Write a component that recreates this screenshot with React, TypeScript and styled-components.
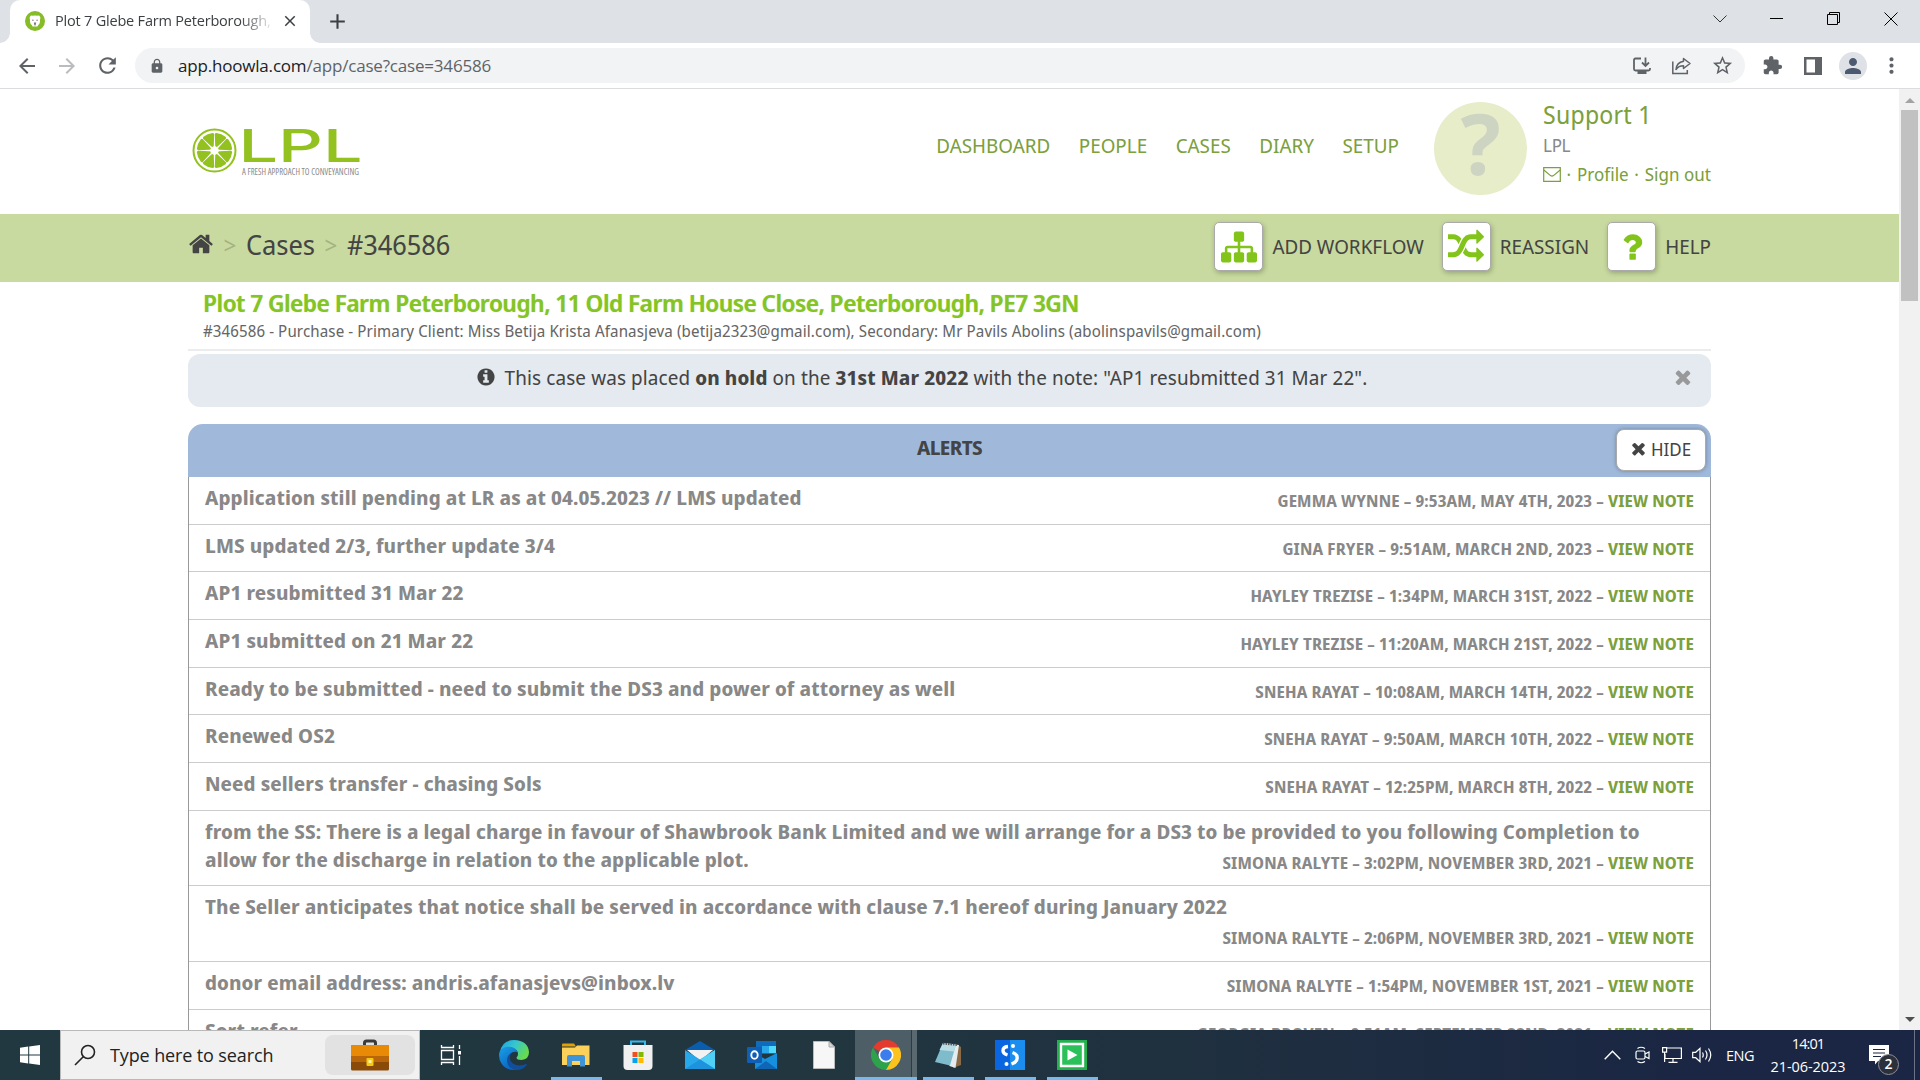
import React from "react";
import styled, { createGlobalStyle } from "styled-components";
import {
  MdAdd,
  MdArrowBack,
  MdArrowForward,
  MdClose,
  MdExtension,
  MdLock,
  MdMoreVert,
  MdPerson,
  MdRefresh,
  MdStarBorder,
} from "react-icons/md";

const Global = createGlobalStyle`
  *, *::before, *::after { box-sizing: border-box; }
  html, body { margin: 0; padding: 0; background: #fff; overflow: hidden; }
  svg { display: block; flex: none; }
`;

const UI = `"Open Sans", "Noto Sans", sans-serif`;
const PAGE = `"Noto Sans Display", "Noto Sans", "Open Sans", sans-serif`;

/* ---------- browser frame ---------- */

const Screen = styled.div`
  width: 1920px;
  height: 1080px;
  display: flex;
  flex-direction: column;
  overflow: hidden;
  font-family: ${PAGE};
  white-space: nowrap;
`;

const TabStrip = styled.div`
  height: 43px;
  flex: none;
  background: #dee1e6;
  display: flex;
  padding-left: 10px;
`;

const Tab = styled.div`
  position: relative;
  width: 300px;
  height: 43px;
  padding: 0 11px 2px 15px;
  background: #fff;
  border-radius: 10px 10px 0 0;
  display: flex;
  align-items: center;
  color: #3c4043;
  &::before,
  &::after {
    content: "";
    position: absolute;
    bottom: 0;
    width: 10px;
    height: 10px;
  }
  &::before {
    left: -10px;
    background: radial-gradient(circle at 0 0, transparent 9.5px, #fff 10px);
  }
  &::after {
    right: -10px;
    background: radial-gradient(circle at 100% 0, transparent 9.5px, #fff 10px);
  }
`;

const TabTitle = styled.div`
  width: 217px;
  margin: 0 11px 0 10px;
  overflow: hidden;
  font: 400 14.5px/24px ${UI};
  letter-spacing: -0.2px;
  mask-image: linear-gradient(90deg, #000 185px, transparent 220px);
`;

const NewTab = styled.div`
  display: flex;
  align-items: center;
  padding: 0 0 1px 15px;
  color: #3c4043;
`;

const WindowControls = styled.div`
  margin-left: auto;
  display: flex;
`;

const WindowButton = styled.div<{ $w: number }>`
  width: ${(p) => p.$w}px;
  height: 37px;
  display: flex;
  align-items: center;
  justify-content: center;
`;

const Toolbar = styled.div`
  height: 46px;
  flex: none;
  background: #fff;
  border-bottom: 1px solid #dadce0;
  display: flex;
  align-items: center;
  padding-left: 15px;
  color: #5f6368;
`;

const NavIcon = styled.div<{ $gap: number; $faded?: boolean }>`
  margin-right: ${(p) => p.$gap}px;
  color: ${(p) => (p.$faded ? "#babcbe" : "#5f6368")};
`;

const Omnibox = styled.div`
  width: 1610px;
  height: 35px;
  border-radius: 18px;
  background: #f1f3f4;
  display: flex;
  align-items: center;
  padding: 0 11px 0 14px;
`;

const Url = styled.div`
  margin-left: 13px;
  font: 400 17px/24px ${UI};
  letter-spacing: -0.19px;
  color: #5f6368;
  b {
    font-weight: 400;
    color: #202124;
  }
`;

const OmniActions = styled.div`
  margin-left: auto;
  display: flex;
  align-items: center;
  gap: 19px;
`;

const Extensions = styled.div`
  display: flex;
  align-items: center;
  padding-left: 17px;
`;

const ProfileDot = styled.div`
  width: 28px;
  height: 28px;
  margin: 0 12px 0 17px;
  border-radius: 50%;
  background: #dee1e6;
  color: #4b5a70;
  display: flex;
  align-items: center;
  justify-content: center;
`;

const Viewport = styled.div`
  flex: 1;
  min-height: 0;
  display: flex;
  overflow: hidden;
`;

const Page = styled.main`
  width: 1899px;
  background: #fff;
`;

const ScrollTrack = styled.div`
  width: 21px;
  background: #f1f1f1;
  display: flex;
  flex-direction: column;
  align-items: center;
  padding: 9px 0 8px;
`;

const ScrollThumb = styled.div`
  width: 17px;
  height: 191px;
  margin: 7px 0 auto;
  background: #c1c1c1;
`;

/* ---------- site header ---------- */

const Container = styled.div`
  width: 1523px;
  margin-left: 188px;
`;

const SiteHeader = styled(Container)`
  height: 125px;
  display: flex;
  align-items: flex-start;
`;

const LogoBox = styled.div`
  padding: 36px 0 0 3px;
`;

const MainNav = styled.nav`
  display: flex;
  gap: 28.5px;
  margin: 42px 35px 0 auto;
  font-size: 20px;
  line-height: 30px;
  color: #7ba03c;
`;

const Avatar = styled.div`
  width: 93px;
  height: 93px;
  margin-top: 13px;
  border-radius: 50%;
  background: #e6edc8;
  color: #ced4c2;
  font-family: "Noto Sans", sans-serif;
  font-size: 84px;
  font-weight: 700;
  line-height: 82px;
  text-align: center;
`;

const UserBlock = styled.div`
  width: 168px;
  margin: 10px 0 0 16px;
`;

const UserName = styled.div`
  font-size: 24.5px;
  line-height: 31px;
  letter-spacing: 0.25px;
  color: #7ba03c;
`;

const UserOrg = styled.div`
  font-size: 18px;
  line-height: 30px;
  letter-spacing: -0.3px;
  color: #888;
`;

const UserLinks = styled.div`
  display: flex;
  align-items: center;
  gap: 5.5px;
  font-size: 18px;
  line-height: 28px;
  letter-spacing: 0.05px;
  color: #7ba03c;
`;

/* ---------- breadcrumb bar ---------- */

const GreenBar = styled.div`
  height: 68px;
  background: #c8da9f;
`;

const BarInner = styled(Container)`
  display: flex;
  align-items: flex-start;
  justify-content: space-between;
`;

const Crumbs = styled.div`
  display: flex;
  align-items: center;
  gap: 9.5px;
  height: 60px;
  font-size: 27px;
  color: #444;
`;

const Chevron = styled.span`
  font-size: 24px;
  color: #a5b383;
`;

const Actions = styled.div`
  display: flex;
  gap: 18px;
  margin-top: 8px;
`;

const Action = styled.div`
  display: flex;
  align-items: center;
  gap: 9px;
  font-size: 20px;
  color: #444;
`;

const ActionIcon = styled.div`
  width: 49px;
  height: 49px;
  border: 1px solid #aaa;
  border-radius: 5px;
  background: #fff;
  box-shadow: 1px 2px 5px rgba(0, 0, 0, 0.25);
  color: #83c41a;
  display: flex;
  align-items: center;
  justify-content: center;
`;

/* ---------- case ---------- */

const CaseHead = styled(Container)`
  height: 69px;
  padding: 4px 0 0 15px;
  border-bottom: 2px solid #ececec;
`;

const CaseTitle = styled.h1`
  margin: 0;
  font-size: 24px;
  font-weight: 600;
  line-height: 33px;
  letter-spacing: -0.53px;
  color: #85c426;
  text-shadow: 0 0 1px rgba(133, 196, 38, 0.5);
`;

const CaseMeta = styled.div`
  font-size: 16px;
  line-height: 25px;
  letter-spacing: 0.12px;
  color: #666;
`;

const HoldNotice = styled(Container)`
  height: 53px;
  margin-top: 3px;
  padding: 0 17px 7px 0;
  border-radius: 12px;
  background: #e4eaef;
  display: flex;
  align-items: center;
  color: #999;
`;

const HoldText = styled.div`
  flex: 1;
  margin-right: 17px;
  display: flex;
  align-items: center;
  justify-content: center;
  gap: 9px;
  font-size: 20px;
  letter-spacing: 0.13px;
  color: #444;
`;

const AlertsHeader = styled(Container)`
  height: 53px;
  margin-top: 17px;
  padding: 5px 5px 0 0;
  border-radius: 15px 15px 0 0;
  background: #a0b9db;
  display: grid;
  grid-template-columns: 1fr auto 1fr;
  align-items: start;
  color: #444;
`;

const AlertsTitle = styled.h2`
  grid-column: 2;
  margin: 0 -5px 0 0;
  font-size: 20px;
  font-weight: 700;
  line-height: 37px;
  letter-spacing: -0.6px;
`;

const HideButton = styled.div`
  justify-self: end;
  width: 90px;
  height: 42px;
  padding: 0 2px 3px 0;
  border: 1px solid #aaa;
  border-radius: 8px;
  background: #fff;
  box-shadow: 0 0 4px rgba(0, 0, 0, 0.3);
  display: flex;
  align-items: center;
  justify-content: center;
  gap: 3px;
  font-size: 18px;
`;

const AlertList = styled(Container)`
  border: solid #999;
  border-width: 0 1px;
`;

const AlertRow = styled.div<{ $tall?: boolean }>`
  display: grid;
  grid-template-columns: 100%;
  height: ${(p) => (p.$tall ? 75.67 : 47.67)}px;
  padding: 7px 16px 10.5px;
  border-bottom: 1px solid #ccc;
  font-weight: 700;
  color: #888;
`;

const AlertText = styled.div`
  grid-area: 1 / 1;
  font-size: 20px;
  line-height: 28px;
  letter-spacing: 0.115px;
  white-space: pre-line;
`;

const AlertInfo = styled.div`
  grid-area: 1 / 1;
  place-self: end;
  font-size: 16px;
  line-height: 24px;
  letter-spacing: 0.15px;
  text-transform: uppercase;
`;

const ViewNote = styled.span`
  color: #7ba03c;
`;

/* ---------- taskbar ---------- */

const Taskbar = styled.div`
  height: 50px;
  flex: none;
  display: flex;
  background: linear-gradient(90deg, #213840 0%, #21363f 45%, #1e2d40 70%, #1a2643 88%, #1a2643 100%);
  color: #fff;
  font-family: ${UI};
`;

const StartButton = styled.div`
  width: 60px;
  display: flex;
  align-items: center;
  justify-content: center;
`;

const SearchBox = styled.div`
  width: 360px;
  border: 1px solid #b9b9b9;
  background: #f1f1f1;
  display: flex;
  align-items: center;
  padding: 0 4px 0 13px;
  color: #222;
`;

const SearchText = styled.span`
  margin-left: 14px;
  font-size: 18px;
  letter-spacing: -0.12px;
`;

const SearchHighlight = styled.div`
  width: 90px;
  height: 40px;
  margin-left: auto;
  border-radius: 8px;
  background: #e2e2e2;
  display: flex;
  align-items: center;
  justify-content: center;
`;

const TaskButtons = styled.div`
  display: flex;
`;

const TaskButton = styled.div<{ $active?: boolean; $running?: boolean }>`
  width: 62px;
  height: 50px;
  display: flex;
  align-items: center;
  justify-content: center;
  &:nth-child(n + 2) {
    transform: translateX(1px);
  }
  background: ${(p) =>
    p.$running
      ? "linear-gradient(#76b9ed, #76b9ed) center bottom / 51px 3px no-repeat"
      : p.$active
      ? "linear-gradient(#76b9ed, #76b9ed) center bottom / 62px 3px no-repeat, linear-gradient(90deg, #4d5e67 56px, #2c3c46 56px, #2c3c46 57px, #5a6870 57px)"
      : "none"};
`;

const Tray = styled.div`
  margin-left: auto;
  display: flex;
  align-items: center;
  font-size: 14.5px;
`;

const TrayIcon = styled.div<{ $gap: number }>`
  margin-right: ${(p) => p.$gap}px;
`;

const Lang = styled.span`
  width: 29px;
  letter-spacing: -0.5px;
`;

const Clock = styled.div`
  width: 78px;
  margin: 0 22px 0 14px;
  text-align: center;
  line-height: 23px;
  letter-spacing: -0.05px;
`;

const ClockTime = styled.div`
  letter-spacing: -0.9px;
`;

const Notifications = styled.div`
  position: relative;
  width: 45px;
  height: 50px;
  padding-top: 15px;
`;

const NotifyBadge = styled.div`
  position: absolute;
  left: 9px;
  top: 24px;
  width: 21px;
  height: 21px;
  border: 1px solid #8d9099;
  border-radius: 50%;
  background: #2b303b;
  font-size: 14px;
  font-weight: 600;
  line-height: 18px;
  text-align: center;
`;

const DesktopPeek = styled.div`
  width: 6px;
  height: 50px;
  border-left: 1px solid #6c7386;
`;

/* ---------- icons ---------- */

const GLYPHS = {
  home: "M1472 992v480q0 26-19 45t-45 19h-384v-384h-256v384h-384q-26 0-45-19t-19-45v-480q0-1 .5-3t.5-3l575-474 575 474q1 2 1 6zm223-69l-62 74q-8 9-21 11h-3q-13 0-21-7l-692-577-692 577q-12 8-24 7-13-2-21-11l-62-74q-8-10-7-23.5t11-21.5l719-599q32-26 76-26t76 26l244 204v-195q0-14 9-23t23-9h192q14 0 23 9t9 23v408l219 182q10 8 11 21.5t-7 23.5z",
  sitemap:
    "M1792 1248v320q0 40-28 68t-68 28h-320q-40 0-68-28t-28-68v-320q0-40 28-68t68-28h96v-192h-512v192h96q40 0 68 28t28 68v320q0 40-28 68t-68 28h-320q-40 0-68-28t-28-68v-320q0-40 28-68t68-28h96v-192h-512v192h96q40 0 68 28t28 68v320q0 40-28 68t-68 28h-320q-40 0-68-28t-28-68v-320q0-40 28-68t68-28h96v-192q0-52 38-90t90-38h512v-192h-96q-40 0-68-28t-28-68v-320q0-40 28-68t68-28h320q40 0 68 28t28 68v320q0 40-28 68t-68 28h-96v192h512q52 0 90 38t38 90v192h96q40 0 68 28t28 68z",
  random:
    "M666 481q-60 92-137 273-22-45-37-72.5t-40.5-63.5-51-56.5-63-35-81.5-14.5h-224q-14 0-23-9t-9-23v-192q0-14 9-23t23-9h224q250 0 410 225zm1126 799q0 14-9 23l-320 320q-9 9-23 9-13 0-22.5-9.5t-9.5-22.5v-192q-32 0-85 .5t-81 1-73-1-71-5-64-10.5-63-18.5-58-28.5-59-40-55-53.5-56-69.5q59-93 136-273 22 45 37 72.5t40.5 63.5 51 56.5 63 35 81.5 14.5h256v-192q0-14 9-23t23-9q12 0 24 10l319 319q9 9 9 23zm0-896q0 14-9 23l-320 320q-9 9-23 9-13 0-22.5-9.5t-9.5-22.5v-192h-256q-48 0-87 15t-69 45-51 61.5-45 77.5q-32 62-78 171-29 66-49.5 111t-54 105-64 100-74 83-90 68.5-106.5 42-128 16.5h-224q-14 0-23-9t-9-23v-192q0-14 9-23t23-9h224q48 0 87-15t69-45 51-61.5 45-77.5q32-62 78-171 29-66 49.5-111t54-105 64-100 74-83 90-68.5 106.5-42 128-16.5h256v-192q0-14 9-23t23-9q12 0 24 10l319 319q9 9 9 23z",
  question:
    "M1088 1256v240q0 16-12 28t-28 12h-240q-16 0-28-12t-12-28v-240q0-16 12-28t28-12h240q16 0 28 12t12 28zm316-600q0 54-15.5 101t-35 76.5-55 59.5-57.5 43.5-61 35.5q-41 23-68.5 65t-27.5 67q0 17-12 32.5t-28 15.5h-240q-15 0-25.5-18.5t-10.5-37.5v-45q0-83 65-156.5t143-108.5q59-27 84-56t25-76q0-42-46.5-74t-107.5-32q-65 0-108 29-35 25-107 115-13 16-31 16-12 0-25-8l-164-125q-13-10-15.5-25t5.5-28q160-266 464-266 80 0 161 31t146 83 106 127.5 41 158.5z",
  info: "M1152 1376v-160q0-14-9-23t-23-9h-96v-512q0-14-9-23t-23-9h-320q-14 0-23 9t-9 23v160q0 14 9 23t23 9h96v320h-96q-14 0-23 9t-9 23v160q0 14 9 23t23 9h448q14 0 23-9t9-23zm-128-896v-160q0-14-9-23t-23-9h-192q-14 0-23 9t-9 23v160q0 14 9 23t23 9h192q14 0 23-9t9-23zm640 416q0 209-103 385.5t-279.5 279.5-385.5 103-385.5-103-279.5-279.5-103-385.5 103-385.5 279.5-279.5 385.5-103 385.5 103 279.5 279.5 103 385.5z",
  times:
    "M1490 1322q0 40-28 68l-136 136q-28 28-68 28t-68-28l-294-294-294 294q-28 28-68 28t-68-28l-136-136q-28-28-28-68t28-68l294-294-294-294q-28-28-28-68t28-68l136-136q28-28 68-28t68 28l294 294 294-294q28-28 68-28t68 28l136 136q28 28 28 68t-28 68l-294 294 294 294q28 28 28 68z",
};

const Glyph = ({ name, size }: { name: keyof typeof GLYPHS; size: number }) => (
  <svg width={size} height={size} viewBox="0 0 1792 1792" fill="currentColor">
    <path d={GLYPHS[name]} />
  </svg>
);

const Favicon = () => (
  <svg width="20" height="20" viewBox="0 0 20 20">
    <circle cx="10" cy="10" r="10" fill="#86bc25" />
    <path d="M4.800 6q1-2 3-1.300 2.200-.6 4.400 0 2-.7 3 1.300.5 1.300-.2 2.400.4 4-1.800 5.600l-.7 1.500H7.500l-.7-1.500Q4.600 12.400 5 8.400 4.300 7.300 4.800 6z" fill="#fff" />
    <circle cx="7.900" cy="9.200" r=".7" fill="#777" />
    <circle cx="12.100" cy="9.200" r=".7" fill="#777" />
    <path d="M8.800 11.500h2.400l-.7 3h-1z" fill="#777" />
  </svg>
);

const Logo = () => {
  const wedges = Array.from({ length: 8 }, (_, i) => i * 45 + 22.5);
  return (
    <svg width="180" height="64" viewBox="0 0 180 64">
      <circle cx="23.500" cy="25.500" r="21" fill="none" stroke="#93c120" strokeWidth="2" />
      {wedges.map((a) => (
        <path
          key={a}
          d="M23.500 22L22.200 20.500L17.500 10.200Q17.300 9 18.600 8.500Q23.500 7 28.400 8.500Q29.700 9 29.500 10.200L24.800 20.500Z"
          fill="#93c120"
          transform={`rotate(${a} 23.500 25.500)`}
        />
      ))}
      <circle cx="23.500" cy="25.500" r="4" fill="#fff" />
      <text x="47.500" y="36.500" fontFamily="Inter, sans-serif" fontSize="44.500" fontWeight="500" fill="#93c120" textLength="124" lengthAdjust="spacingAndGlyphs">
        LPL
      </text>
      <text x="51" y="49.500" fontFamily="Open Sans, sans-serif" fontStretch="75%" fontSize="8.500" fill="#8a8a8a" textLength="117" lengthAdjust="spacingAndGlyphs">
        A FRESH APPROACH TO CONVEYANCING
      </text>
    </svg>
  );
};

const InstallIcon = () => (
  <svg width="20" height="20" viewBox="0 0 20 20" fill="none" stroke="#5f6368" strokeWidth="1.800">
    <path d="M9 2.500H3.500Q2 2.500 2 4v9q0 1.500 1.500 1.500h13q1.500 0 1.500-1.500v-1" />
    <path d="M13.500 1.500v8M10 6.500l3.500 3.500L17 6.500" />
    <path d="M5.500 16.500h9" strokeWidth="3" />
  </svg>
);

const ShareIcon = () => (
  <svg width="21" height="20" viewBox="0 0 21 20" fill="none" stroke="#5f6368" strokeWidth="1.500">
    <path d="M1.800 5.500v12h14.500v-3.500" />
    <path d="M12.500 2.500l6.500 5-6.500 5V9.800q-5 0-7.500 3.700.6-7 7.500-8.200z" strokeLinejoin="round" />
  </svg>
);

const SidePanelIcon = () => (
  <svg width="18" height="18" viewBox="0 0 18 18">
    <path d="M0 0h18v18H0zM2.500 2.500v13h8.500v-13z" fill="#5f6368" fillRule="evenodd" />
  </svg>
);

const EnvelopeIcon = () => (
  <svg width="18" height="15" viewBox="0 0 18 15" fill="none" stroke="#7ba03c" strokeWidth="1.200">
    <path d="M.7.7h16.600v13.600H.7z" />
    <path d="M.8 3l6.700 5.600q1.500 1 3 0L17.200 3" />
  </svg>
);

const Briefcase = () => (
  <svg width="38" height="32" viewBox="0 0 38 32">
    <path d="M13.500 6V4q0-2 2-2h7q2 0 2 2v2" fill="none" stroke="#3b3b3b" strokeWidth="3" />
    <rect x="0" y="6" width="38" height="25.500" rx="1.500" fill="#8a4b08" />
    <path d="M0 7.500Q0 6 1.500 6h35Q38 6 38 7.500V23H0z" fill="#e88a05" />
    <path d="M0 17h38v6H0z" fill="#b9660a" />
    <rect x="15.500" y="19" width="7" height="8" rx="1" fill="#f6c90e" />
    <rect x="17.500" y="21" width="3" height="3" fill="#fff4a0" />
  </svg>
);

const TaskViewIcon = () => (
  <svg width="22" height="22" viewBox="0 0 22 22" fill="none" stroke="#fff" strokeWidth="1.300">
    <path d="M1.500 1v2.500h12V1M1.500 21v-2.500h12V21M1.500 6.500h12v9h-12zM19.500 1v4M19.500 12v9" />
    <path d="M18 7h3v3.500h-3z" fill="#fff" stroke="none" />
  </svg>
);

const EdgeIcon = () => (
  <svg width="30" height="30" viewBox="0 0 30 30">
    <defs>
      <linearGradient id="edgeTop" x1="0" y1="0" x2="1" y2=".5">
        <stop offset="0" stopColor="#1f9fe0" />
        <stop offset=".5" stopColor="#35c6d0" />
        <stop offset="1" stopColor="#66dc4e" />
      </linearGradient>
      <linearGradient id="edgeLeft" x1="0" y1="0" x2=".6" y2="1">
        <stop offset="0" stopColor="#1aa0e6" />
        <stop offset="1" stopColor="#0b62c0" />
      </linearGradient>
    </defs>
    <path d="M1 12Q3 0 15 0 29 0.500 30 12q0 7.500-7.500 8-5 0-5-2.500 1.500-1 1.500-3.500 0-4.500-5-5.500Q5 7.500 1 12z" fill="url(#edgeTop)" />
    <path d="M0 15q.5-7.500 8.500-8.200 8-.3 10 5.200-8-1.500-8.500 6Q10 27 19 29.300 8 32 2.500 23.500 0 20 0 15z" fill="url(#edgeLeft)" />
    <path d="M12 13.500Q9 20 14 23.500t13.500.5q.8 0 .3 1Q23 31 16 29.800 8 27.500 8 20q.3-5 4-6.500z" fill="#104f9c" />
  </svg>
);

const ExplorerIcon = () => (
  <svg width="28" height="24" viewBox="0 0 28 24">
    <path d="M0 1.500Q0 .5 1 .5h11l2 3H0z" fill="#e0a106" />
    <path d="M0 4.500h13l2-2h12.500V22H0z" fill="#fbd15b" />
    <path d="M5 23.500V14q0-2 2-2h14q2 0 2 2v9.500h-5V18h-8v5.500z" fill="#3f94d8" />
  </svg>
);

const StoreIcon = () => (
  <svg width="30" height="30" viewBox="0 0 30 30">
    <path d="M8 6V1.500h14V6" fill="none" stroke="#35b8f1" strokeWidth="2" />
    <path d="M.5 5h29v21q0 4-4 4h-21q-4 0-4-4z" fill="#f0f0f0" />
    <path d="M9.500 12h5v5h-5z" fill="#f25022" />
    <path d="M15.500 12h5v5h-5z" fill="#7fba00" />
    <path d="M9.500 18h5v5h-5z" fill="#00a4ef" />
    <path d="M15.500 18h5v5h-5z" fill="#ffb900" />
  </svg>
);

const MailIcon = () => (
  <svg width="30" height="28" viewBox="0 0 30 28">
    <path d="M0 9L15 0l15 9z" fill="#0a5cad" />
    <path d="M2 9h26L15 20z" fill="#f2f2f2" />
    <path d="M0 9l15 9.500L30 9v19H0z" fill="#27a8ea" />
    <path d="M15 18.500L30 9v19z" fill="#50d0f5" />
    <path d="M0 28l15-9.500L30 28z" fill="#1d93dd" />
  </svg>
);

const OutlookIcon = () => (
  <svg width="30" height="28" viewBox="0 0 30 28">
    <path d="M9 0h20v13H9z" fill="#0f6cbd" />
    <path d="M15 5h7v7h-7z" fill="#28a8ea" />
    <path d="M22 5h7v7h-7z" fill="#50d9ff" />
    <path d="M8 12l10 6 12-6v16H8z" fill="#1490df" />
    <path d="M8 28l11-8 11 8z" fill="#1066b5" />
    <rect x="0" y="6" width="15" height="16" rx="1" fill="#0f5fb5" />
    <ellipse cx="7.500" cy="14" rx="3.200" ry="3.800" fill="none" stroke="#fff" strokeWidth="1.900" />
  </svg>
);

const DocIcon = () => (
  <svg width="22" height="28" viewBox="0 0 22 28">
    <path d="M.5.500h15.500l5.500 5.500v21.500H.5z" fill="#f7f7f7" stroke="#bbb" />
    <path d="M16 .5V6h5.500z" fill="#d6d6d6" stroke="#aaa" />
  </svg>
);

const ChromeIcon = () => (
  <svg width="30" height="30" viewBox="0 0 30 30">
    <path d="M15 15L2 7.500A15 15 0 0 1 28 7.500z" fill="#e33b2e" />
    <path d="M15 15V7.500h13A15 15 0 0 1 15 30z" fill="#fcc31e" />
    <path d="M15 15l6.500 3.750L15 30A15 15 0 0 1 2 7.500l6.500 11.250z" fill="#2da14b" />
    <circle cx="15" cy="15" r="7.500" fill="#fff" />
    <circle cx="15" cy="15" r="5.800" fill="#3b7ded" />
  </svg>
);

const NotepadIcon = () => (
  <svg width="28" height="28" viewBox="0 0 28 28">
    <path d="M24 4l3 2v18l-8 3z" fill="#8b6b45" />
    <path d="M9 2l16 2-3.500 23-6-2z" fill="#e4ecee" />
    <path d="M9 2l13 1.500-6 21L1 21z" fill="#7fbccb" />
    <path d="M9 2l13 1.500-2 7L5.500 9z" fill="#b9dde4" />
    <path d="M9 2.500l14 1.500" stroke="#555" strokeWidth="2" strokeDasharray="1.500 1" />
  </svg>
);

const SwirlIcon = () => (
  <svg width="30" height="30" viewBox="0 0 30 30">
    <path d="M0 0h30v30H0z" fill="#0a66e0" />
    <path d="M15 0h15v30H15z" fill="#1b8def" />
    <path d="M13 6.500Q8 7 8 10.800q0 2.700 4.500 4.200M17 6.500M17.500 12.500q4.700 1.500 4.700 5.500T16.500 24" fill="none" stroke="#fff" strokeWidth="3.400" />
    <circle cx="18" cy="6" r="2" fill="#fff" />
    <circle cx="11.500" cy="24" r="2" fill="#fff" />
  </svg>
);

const PlayIcon = () => (
  <svg width="30" height="30" viewBox="0 0 30 30">
    <path d="M0 0h30v30H0z" fill="#22b14c" />
    <path d="M4 4h22v22H4z" fill="#2cc05a" stroke="#fff" strokeWidth="2.400" />
    <path d="M10.500 9.500l10 5.500-10 5.500z" fill="#fff" />
  </svg>
);

const alerts: { text: string; by: string; tall?: boolean }[] = [
  { text: "Application still pending at LR as at 04.05.2023 // LMS updated", by: "Gemma Wynne – 9:53am, May 4th, 2023" },
  { text: "LMS updated 2/3, further update 3/4", by: "Gina Fryer – 9:51am, March 2nd, 2023" },
  { text: "AP1 resubmitted 31 Mar 22", by: "Hayley Trezise – 1:34pm, March 31st, 2022" },
  { text: "AP1 submitted on 21 Mar 22", by: "Hayley Trezise – 11:20am, March 21st, 2022" },
  { text: "Ready to be submitted - need to submit the DS3 and power of attorney as well", by: "Sneha Rayat – 10:08am, March 14th, 2022" },
  { text: "Renewed OS2", by: "Sneha Rayat – 9:50am, March 10th, 2022" },
  { text: "Need sellers transfer - chasing Sols", by: "Sneha Rayat – 12:25pm, March 8th, 2022" },
  {
    text: "from the SS: There is a legal charge in favour of Shawbrook Bank Limited and we will arrange for a DS3 to be provided to you following Completion to\nallow for the discharge in relation to the applicable plot.",
    by: "Simona Ralyte – 3:02pm, November 3rd, 2021",
    tall: true,
  },
  {
    text: "The Seller anticipates that notice shall be served in accordance with clause 7.1 hereof during January 2022",
    by: "Simona Ralyte – 2:06pm, November 3rd, 2021",
    tall: true,
  },
  { text: "donor email address: andris.afanasjevs@inbox.lv", by: "Simona Ralyte – 1:54pm, November 1st, 2021" },
  { text: "Sort refer", by: "Georgia Broven – 9:51am, September 22nd, 2021" },
];

export default function App() {
  return (
    <Screen>
      <Global />
      <TabStrip>
        <Tab>
          <Favicon />
          <TabTitle>Plot 7 Glebe Farm Peterborough,</TabTitle>
          <MdClose size={18} />
        </Tab>
        <NewTab>
          <MdAdd size={25} />
        </NewTab>
        <WindowControls>
          <WindowButton $w={57}>
            <svg width="14" height="8" viewBox="0 0 14 8" fill="none" stroke="#333">
              <path d="M.5.500L7 7 13.500.5" />
            </svg>
          </WindowButton>
          <WindowButton $w={57}>
            <svg width="13" height="1" viewBox="0 0 13 1">
              <path d="M0 0h13v1H0z" />
            </svg>
          </WindowButton>
          <WindowButton $w={57}>
            <svg width="13" height="13" viewBox="0 0 13 13" fill="none" stroke="#000">
              <path d="M.5 2.500h10v10H.5zM2.500 2.500v-2h10v10h-2" />
            </svg>
          </WindowButton>
          <WindowButton $w={58}>
            <svg width="14" height="14" viewBox="0 0 14 14" fill="none" stroke="#000">
              <path d="M.5.500l13 13M13.500.500l-13 13" />
            </svg>
          </WindowButton>
        </WindowControls>
      </TabStrip>
      <Toolbar>
        <NavIcon $gap={16}>
          <MdArrowBack size={24} />
        </NavIcon>
        <NavIcon $gap={16} $faded>
          <MdArrowForward size={24} />
        </NavIcon>
        <NavIcon $gap={15}>
          <MdRefresh size={25} />
        </NavIcon>
        <Omnibox>
          <MdLock size={16} />
          <Url>
            <b>app.hoowla.com</b>/app/case?case=346586
          </Url>
          <OmniActions>
            <InstallIcon />
            <ShareIcon />
            <MdStarBorder size={23} />
          </OmniActions>
        </Omnibox>
        <Extensions>
          <MdExtension size={21} />
          <NavIcon $gap={0}>
            <svg width="21" height="18" />
          </NavIcon>
          <SidePanelIcon />
          <ProfileDot>
            <MdPerson size={24} />
          </ProfileDot>
          <MdMoreVert size={25} />
        </Extensions>
      </Toolbar>
      <Viewport>
        <Page>
          <SiteHeader>
            <LogoBox>
              <Logo />
            </LogoBox>
            <MainNav>
              <span>DASHBOARD</span>
              <span>PEOPLE</span>
              <span>CASES</span>
              <span>DIARY</span>
              <span>SETUP</span>
            </MainNav>
            <Avatar>?</Avatar>
            <UserBlock>
              <UserName>Support 1</UserName>
              <UserOrg>LPL</UserOrg>
              <UserLinks>
                <EnvelopeIcon />
                <span>·</span>
                <span>Profile</span>
                <span>·</span>
                <span>Sign out</span>
              </UserLinks>
            </UserBlock>
          </SiteHeader>
          <GreenBar>
            <BarInner>
              <Crumbs>
                <Glyph name="home" size={26} />
                <Chevron>&gt;</Chevron>
                <span>Cases</span>
                <Chevron>&gt;</Chevron>
                <span>#346586</span>
              </Crumbs>
              <Actions>
                <Action>
                  <ActionIcon>
                    <Glyph name="sitemap" size={36} />
                  </ActionIcon>
                  ADD WORKFLOW
                </Action>
                <Action>
                  <ActionIcon>
                    <Glyph name="random" size={36} />
                  </ActionIcon>
                  REASSIGN
                </Action>
                <Action>
                  <ActionIcon>
                    <Glyph name="question" size={36} />
                  </ActionIcon>
                  HELP
                </Action>
              </Actions>
            </BarInner>
          </GreenBar>
          <CaseHead>
            <CaseTitle>Plot 7 Glebe Farm Peterborough, 11 Old Farm House Close, Peterborough, PE7 3GN</CaseTitle>
            <CaseMeta>
              #346586 - Purchase - Primary Client: Miss Betija Krista Afanasjeva (betija2323@gmail.com), Secondary: Mr Pavils
              Abolins (abolinspavils@gmail.com)
            </CaseMeta>
          </CaseHead>
          <HoldNotice>
            <HoldText>
              <Glyph name="info" size={20} />
              <span>
                This case was placed <b>on hold</b> on the <b>31st Mar 2022</b> with the note: "AP1 resubmitted 31 Mar 22".
              </span>
            </HoldText>
            <Glyph name="times" size={22} />
          </HoldNotice>
          <AlertsHeader>
            <AlertsTitle>ALERTS</AlertsTitle>
            <HideButton>
              <Glyph name="times" size={19} />
              HIDE
            </HideButton>
          </AlertsHeader>
          <AlertList>
            {alerts.map((a) => (
              <AlertRow key={a.text} $tall={a.tall}>
                <AlertText>{a.text}</AlertText>
                <AlertInfo>
                  {a.by} – <ViewNote>View note</ViewNote>
                </AlertInfo>
              </AlertRow>
            ))}
          </AlertList>
        </Page>
        <ScrollTrack>
          <svg width="10" height="5" viewBox="0 0 10 5">
            <path d="M5 0l5 5H0z" fill="#a3a3a3" />
          </svg>
          <ScrollThumb />
          <svg width="10" height="5" viewBox="0 0 10 5">
            <path d="M5 5l5-5H0z" fill="#505050" />
          </svg>
        </ScrollTrack>
      </Viewport>
      <Taskbar>
        <StartButton>
          <svg width="20" height="20" viewBox="0 0 20 20" fill="#fff">
            <path d="M0 2.800L8.200 1.600V9.500H0zM9.200 1.500L20 0v9.500H9.200zM0 10.500h8.200v7.900L0 17.200zM9.200 10.500H20V20L9.200 18.500z" />
          </svg>
        </StartButton>
        <SearchBox>
          <svg width="22" height="22" viewBox="0 0 22 22" fill="none" stroke="#222" strokeWidth="1.600">
            <circle cx="14" cy="8" r="6.500" />
            <path d="M9.500 12.500L1 21" />
          </svg>
          <SearchText>Type here to search</SearchText>
          <SearchHighlight>
            <Briefcase />
          </SearchHighlight>
        </SearchBox>
        <TaskButtons>
          <TaskButton><TaskViewIcon /></TaskButton>
          <TaskButton><EdgeIcon /></TaskButton>
          <TaskButton $running><ExplorerIcon /></TaskButton>
          <TaskButton><StoreIcon /></TaskButton>
          <TaskButton><MailIcon /></TaskButton>
          <TaskButton><OutlookIcon /></TaskButton>
          <TaskButton><DocIcon /></TaskButton>
          <TaskButton $active><ChromeIcon /></TaskButton>
          <TaskButton $running><NotepadIcon /></TaskButton>
          <TaskButton $running><SwirlIcon /></TaskButton>
          <TaskButton $running><PlayIcon /></TaskButton>
        </TaskButtons>
        <Tray>
          <TrayIcon $gap={14}>
            <svg width="17" height="10" viewBox="0 0 17 10" fill="none" stroke="#fff" strokeWidth="1.400">
              <path d="M.7 9.300L8.500 1.200l7.800 8.100" />
            </svg>
          </TrayIcon>
          <TrayIcon $gap={11}>
            <svg width="16" height="18" viewBox="0 0 16 18" fill="none" stroke="#fff" strokeWidth="1.200">
              <rect x="1" y="5" width="9" height="8" rx="1.500" />
              <path d="M10 8l4-2v6.500l-4-2M2.500 2.500Q6 0 10 2.500M2.500 15.500Q6 18 10 15.500" />
            </svg>
          </TrayIcon>
          <TrayIcon $gap={10}>
            <svg width="20" height="18" viewBox="0 0 20 18" fill="none" stroke="#fff" strokeWidth="1.200">
              <path d="M5 2h14.400v10.500H3V8M11 12.500V16M6.500 16.400h9M.6 1.600h4v4.500h-4zM2.600 6v10" />
            </svg>
          </TrayIcon>
          <TrayIcon $gap={13}>
            <svg width="21" height="18" viewBox="0 0 21 18" fill="none" stroke="#fff" strokeWidth="1.200">
              <path d="M.7 6.300h3L8 2.300v13.400l-4.300-4h-3zM10.500 6.500q1.500 2.500 0 5M13.500 4.500q3 4.500 0 9M16.500 2.500q4.500 6.500 0 13" />
            </svg>
          </TrayIcon>
          <Lang>ENG</Lang>
          <Clock>
            <ClockTime>14:01</ClockTime>
            <div>21-06-2023</div>
          </Clock>
          <Notifications>
            <svg width="20" height="20" viewBox="0 0 20 20">
              <path d="M0 0h20v16H9l-3 3.500V16H0z" fill="#fff" />
              <path d="M4 4.500h12M4 8h12M4 11.500h8" stroke="#1a2643" />
            </svg>
            <NotifyBadge>2</NotifyBadge>
          </Notifications>
          <DesktopPeek />
        </Tray>
      </Taskbar>
    </Screen>
  );
}
